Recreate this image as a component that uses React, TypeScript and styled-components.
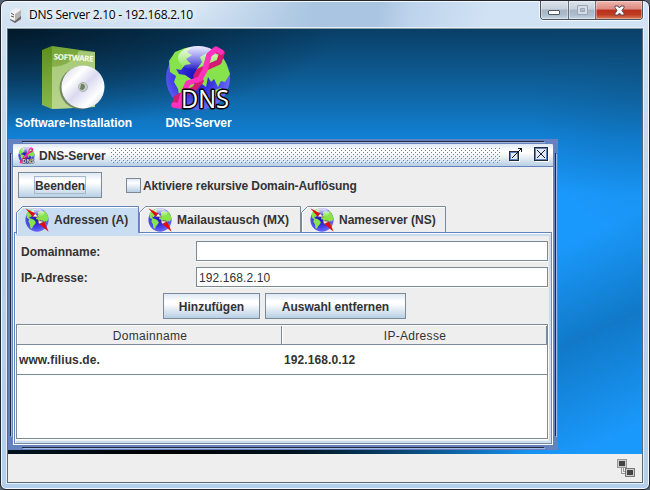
import React from "react";
import styled, { createGlobalStyle } from "styled-components";

const GlobalStyle = createGlobalStyle`
  html, body { margin: 0; padding: 0; overflow: hidden; }
  body { font: bold 12px/14px "Liberation Sans", Arial, sans-serif; color: #333; background: #54626e; }
  * { box-sizing: border-box; }
`;

const Window = styled.main`
  width: 650px;
  height: 490px;
  padding: 0 6px 6px;
  display: flex;
  flex-direction: column;
  border: 1px solid #23262c;
  border-radius: 7px 7px 6px 6px;
  box-shadow: inset 0 0 0 1px #f2f8fe;
  background: linear-gradient(100deg, rgba(255,255,255,0) 30%, #a9c5e1 48%, #a9c5e1 58%, #bdd3ec 63%, #d1e2f4 75%) 0 0 / 100% 28px no-repeat,
    linear-gradient(#dbe8f5, #cfe0f2 27px, #b6d1ec 50%, #b2cfec);
`;

const TitleBar = styled.header`
  height: 27px;
  flex: none;
  display: flex;
  align-items: flex-start;
  padding: 0 0 0 2px;
`;

const WindowTitle = styled.h1`
  flex: 1;
  margin: 5px 0 0 6px;
  font: 12px/17px "Open Sans", "Segoe UI", sans-serif;
  letter-spacing: -0.25px;
  color: #000;
  text-shadow: 0 0 6px #fff, 0 0 6px #fff;
`;

const AppIcon = styled.svg`
  margin-top: 6px;
  display: block;
`;

const Controls = styled.div`
  display: flex;
  height: 19px;
  border: 1px solid #4b535d;
  border-top: 0;
  border-radius: 0 0 4px 4px;
  box-shadow: 0 1px 0 #f2f8fd, 1px 0 0 #f2f8fd, -1px 0 0 #f2f8fd;
  overflow: hidden;
`;

const Control = styled.button<{ $w: number; $close?: boolean; $first?: boolean }>`
  width: ${(p) => p.$w}px;
  padding: 0;
  border: 0;
  border-left: ${(p) => (p.$first ? 0 : 1)}px solid #67727e;
  display: grid;
  place-items: center;
  box-shadow: inset 0 0 0 1px rgba(255, 255, 255, 0.35);
  background: ${(p) =>
    p.$close
      ? "linear-gradient(#efb5ae, #dc8a80 45%, #bb2f1a 50%, #bd3b20 75%, #da7b5c)"
      : "linear-gradient(#dce4ec, #c6d0db 45%, #a6b4c3 50%, #afbfd0 80%, #cad8e6)"};
  svg { display: block; }
`;

const Client = styled.section`
  flex: 1;
  display: flex;
  flex-direction: column;
  border: 1px solid #5b6875;
  border-top-color: #8c9b9c;
  box-shadow: 0 0 0 1px #e5f0fa;
`;

const Desktop = styled.div`
  height: 425px;
  flex: none;
  background:
    linear-gradient(90deg, #00131f, #000 25%, #00121e 45%, rgba(0, 24, 40, 0) 82%) 0 100% / 100% 30px no-repeat,
    radial-gradient(ellipse 330px 100px at 0 0, rgba(0, 10, 18, 0.72), rgba(0, 10, 18, 0.35) 55%, transparent),
    radial-gradient(ellipse 110px 150px at 100% 60px, rgba(10, 70, 112, 0.2), transparent),
    linear-gradient(155deg, transparent 66%, rgba(15, 115, 190, 0.85) 80%, rgba(26, 155, 255, 0) 96%),
    linear-gradient(#083f67, #0d5488 35px, #0f69aa 70px, #1180d4 108px, #1a99fc 165px, #1a99fc);
`;

const Shortcuts = styled.nav`
  height: 110px;
  padding: 16px 0 0 3px;
  display: flex;
`;

const Shortcut = styled.a`
  width: 125px;
  display: flex;
  flex-direction: column;
  align-items: center;
  color: #fff;
  svg { display: block; height: 66px; margin-right: 2px; overflow: visible; }
  span { margin-top: 5px; letter-spacing: -0.05px; }
`;

const Frame = styled.section`
  width: 550px;
  height: 311px;
  padding: 5px;
  display: flex;
  flex-direction: column;
  background:
    linear-gradient(#222a3c, #222a3c) 14px 2px / 522px 1px no-repeat,
    linear-gradient(#a3b8e0, #a3b8e0) 15px 3px / 522px 1px no-repeat,
    linear-gradient(#222a3c, #222a3c) 14px 308px / 522px 1px no-repeat,
    linear-gradient(#a3b8e0, #a3b8e0) 15px 309px / 522px 1px no-repeat,
    linear-gradient(#222a3c, #222a3c) 2px 14px / 1px 283px no-repeat,
    linear-gradient(#a3b8e0, #a3b8e0) 3px 15px / 1px 283px no-repeat,
    linear-gradient(#222a3c, #222a3c) 547px 14px / 1px 283px no-repeat,
    linear-gradient(#a3b8e0, #a3b8e0) 548px 15px / 1px 283px no-repeat,
    #6382bf;
`;

const FrameTitle = styled.header`
  height: 23px;
  flex: none;
  padding: 0 4px 0 5px;
  display: flex;
  align-items: center;
  border-bottom: 1px solid #6382bf;
  border-radius: 1px 1px 0 0;
  background: linear-gradient(#dde8f3, #fff 30%, #fff 40%, #b8cfe5);
`;

const FrameName = styled.h2`
  margin: 2px 6px 0 4px;
  font: inherit;
  width: 66px;
  white-space: nowrap;
`;

const Grip = styled.div`
  width: 391px;
  height: 15px;
  margin-right: 7px;
  background:
    conic-gradient(from 270deg at 1px 1px, #6382bf 90deg, transparent 0) 0 0 / 4px 4px,
    conic-gradient(from 270deg at 1px 1px, #6382bf 90deg, transparent 0) 2px 2px / 4px 4px,
    conic-gradient(from 270deg at 1px 1px, #fff 90deg, transparent 0) 1px 1px / 4px 4px,
    conic-gradient(from 270deg at 1px 1px, #fff 90deg, transparent 0) 3px 3px / 4px 4px;
`;

const FrameTool = styled.svg`
  display: block;
  margin: -2px 11px 0 0;
  &:last-child { margin-right: 0; }
`;

const FrameBody = styled.div`
  flex: 1;
  background: #eee;
  border: 1px solid #fff;
  border-top: 0;
  display: flex;
  flex-direction: column;
`;

const Actions = styled.div`
  height: 39px;
  flex: none;
  padding: 5px 0 0 4px;
  display: flex;
`;

const MetalButton = styled.button<{ $w: number }>`
  width: ${(p) => p.$w}px;
  height: 26px;
  padding: 1px 0 0;
  display: grid;
  place-items: center;
  border: 1px solid #7a8a99;
  color: #333;
  font: inherit;
  background: linear-gradient(#dde8f3, #fff 30%, #fff 40%, #b8cfe5);
`;

const FocusRing = styled.span`
  margin-top: -1px;
  border: 1px solid #a3b8cc;
  height: 18px;
  line-height: 18px;
  width: 52px;
  text-align: center;
  letter-spacing: -0.1px;
`;

const Check = styled.label`
  margin: 0 0 0 24px;
  height: 27px;
  display: flex;
  align-items: center;
  letter-spacing: -0.12px;
  &::before {
    content: "";
    width: 13px;
    height: 13px;
    margin-right: 2px;
    margin-left: 0;
    outline: 0;
    border: 1px solid #7a8a99;
    background: linear-gradient(#dde8f3, #fff 30%, #b8cfe5);
  }
`;

const Tabs = styled.div`
  height: 26px;
  flex: none;
  display: flex;
  padding-left: 2px;
`;

const Tab = styled.div<{ $w: number }>`
  width: ${(p) => p.$w}px;
  height: 26px;
  display: grid;
  grid-template-columns: 100%;
  > * { grid-area: 1 / 1; }
  > svg { display: block; z-index: 1; }
`;

const TabLabel = styled.span<{ $ls: number }>`
  z-index: 2;
  display: flex;
  align-items: center;
  padding-left: 9px;
  gap: 5px;
  height: 27px;
  white-space: nowrap;
  letter-spacing: ${(p) => p.$ls}px;
`;

const Pane = styled.div`
  flex: 1;
  padding: 3px 0 0 1px;
  border: 1px solid #6382bf;
  border-right-color: #7a8a99;
  border-bottom-color: #7a8a99;
  background:
    linear-gradient(#fff, #fff) 0 0 / 100% 1px no-repeat,
    linear-gradient(#c8ddf2, #c8ddf2) 1px 1px / 100% 2px no-repeat,
    linear-gradient(#fff, #fff) 0 0 / 1px 100% no-repeat,
    linear-gradient(#c8ddf2, #c8ddf2) 100% 0 / 2px 100% no-repeat,
    linear-gradient(#c8ddf2, #c8ddf2) 0 100% / 100% 2px no-repeat,
    #eee;
`;

const Field = styled.label`
  display: flex;
  align-items: center;
  height: 20px;
  margin: 5px 3px 6px 5px;
  & + & { margin-top: 0; }
  span { width: 175px; padding-top: 1px; }
`;

const Input = styled.input`
  width: 352px;
  height: 20px;
  padding: 1px 0 0 2px;
  border: 1px solid #7a8a99;
  outline: 0;
  background: #fff;
  box-shadow: 0 1px 0 #fff;
  color: #333;
  font: 12px "Liberation Sans", Arial, sans-serif;
  letter-spacing: 0.1px;
`;

const ButtonRow = styled.div`
  display: flex;
  gap: 5px;
  padding-left: 147px;
`;

const Table = styled.div`
  width: 532px;
  height: 115px;
  margin-top: 5px;
  border: 1px solid #7a8a99;
  box-shadow: 0 1px 0 #fff, 1px 0 0 #fff;
  background: #fff;
`;

const Row = styled.div<{ $head?: boolean }>`
  display: grid;
  grid-template-columns: 265px 1fr;
  height: ${(p) => (p.$head ? 20 : 30)}px;
  border-bottom: 1px solid #7a8a99;
  font-weight: ${(p) => (p.$head ? 400 : 700)};
`;

const HeadCell = styled.span`
  height: 19px;
  background: #eee;
  border: solid #fff;
  border-width: 1px 0 0 1px;
  box-shadow: inset -1px 0 0 #7a8a99;
  line-height: 20px;
  text-align: center;
  letter-spacing: 0.3px;
`;

const Cell = styled.span`
  padding-left: 2px;
  line-height: 30px;
  letter-spacing: 0.1px;
`;

const StatusBar = styled.footer`
  flex: 1;
  background: #eee;
  display: flex;
  justify-content: flex-end;
  padding: 5px 7px 0 0;
`;

const landWest =
  "M4 16 10 7 20 3 27 2 22 7 27 10 21 14 26 19 20 20 16 25 11 24 14 29 20 30 26 34 30 40 26 46 22 50 19 57 15 55 13 44 9 37 11 31 5 27Z";
const landEast =
  "M32 24 37 17 35 12 42 8 49 10 55 8 61 18 65 29 60 37 56 36 53 42 49 34 46 37 43 32 41 42 37 39 35 31 30 31Z M50 45 56 43 58 48 53 52 48 50Z";

const Globe = ({ id }: { id: string }) => (
  <>
    <defs>
      <radialGradient id={id} cx="45%" cy="45%" r="60%">
        <stop offset="0" stopColor="#1813bd" />
        <stop offset=".5" stopColor="#3b35e0" />
        <stop offset="1" stopColor="#6f70ff" />
      </radialGradient>
      <linearGradient id={id + "s"} x2="0" y2="1">
        <stop stopColor="#fff" stopOpacity=".9" />
        <stop offset="1" stopColor="#fff" stopOpacity="0" />
      </linearGradient>
    </defs>
    <circle cx="33" cy="33" r="32" fill={`url(#${id})`} />
    <path d={landWest + landEast} fill="#87e34b" />
    <ellipse cx="33" cy="13" rx="20" ry="12" fill={`url(#${id}s)`} />
  </>
);

const Helix = () => (
  <g fill="none" strokeLinejoin="round" strokeLinecap="round">
    <path d="M50 5 57 8 54 17 34 26 31 31 36 36 29 44 11 53 10 60" stroke="#d51b6e" strokeWidth="5.500" />
    <path d="M9 60 15 61 18 49 23 38 35 34 40 25 44 10 51 4 56 7" stroke="#ff31bd" strokeWidth="5.500" />
  </g>
);

const CompassGlobe = ({ id }: { id: string }) => (
  <svg width="24" height="24" viewBox="0 0 66 66">
    <Globe id={id} />
    <path d="M1 1 28 15 21 24Z M65 65 53 37 39 44Z" fill="#e30b13" />
    <path d="M28 15 37 25 21 24Z M39 44 36 35 53 37Z" fill="#fff" stroke="#8c3038" strokeWidth="1.500" />
  </svg>
);

const tabs = [
  { label: "Adressen (A)", w: 123, ls: -0.04 },
  { label: "Mailaustausch (MX)", w: 162, ls: 0 },
  { label: "Nameserver (NS)", w: 145, ls: 0 },
];

export default function App() {
  return (
    <>
      <GlobalStyle />
      <Window>
        <TitleBar>
          <AppIcon width="14" height="17" viewBox="0 0 14 17">
            <path d="M1 5 7 1 12 3 12 12 6 16 1 13Z" fill="#f2f2f2" />
            <path d="M6 7 12 3 12 12 6 16Z" fill="#b4b4b4" />
            <path d="M1 12 6 14 12 9 12 12 6 16 1 13Z" fill="#666" />
            <path d="M2 6 5 8M2 9 5 10" stroke="#555" />
          </AppIcon>
          <WindowTitle>DNS Server 2.10 - 192.168.2.10</WindowTitle>
          <Controls>
            <Control $w={27} $first aria-label="Minimieren">
              <svg width="13" height="18"><rect x=".5" y="9.500" width="11" height="4" rx=".5" fill="#fff" stroke="#4d5763" /></svg>
            </Control>
            <Control $w={27} aria-label="Maximieren">
              <svg width="13" height="18"><path d="M1.500 4.500h10v9h-10z M4.500 7.500h4v3h-4z" fill="#d4dce5" fillRule="evenodd" stroke="#9aa6b3" /></svg>
            </Control>
            <Control $w={47} $close aria-label="Schließen">
              <svg width="13" height="18"><path d="M2 5h3l1.500 2L8 5h3v1.500L9 9.500l2 3V14H8l-1.500-2L5 14H2v-1.500l2-3-2-3Z" fill="#fff" stroke="#564b58" /></svg>
            </Control>
          </Controls>
        </TitleBar>
        <Client>
          <Desktop>
            <Shortcuts>
              <Shortcut>
                <svg width="64" height="66" viewBox="0 0 64 66">
                  <defs>
                    <linearGradient id="box" x2="0" y2="1"><stop stopColor="#75a638" /><stop offset="1" stopColor="#a8cb70" /></linearGradient>
                    <linearGradient id="side" x2="0" y2="1"><stop stopColor="#5d8f1d" /><stop offset="1" stopColor="#8ab84b" /></linearGradient>
                    <linearGradient id="disc" x2="1" y2="1"><stop stopColor="#cdcde0" /><stop offset=".3" stopColor="#fff" /><stop offset=".5" stopColor="#dadaf0" /><stop offset=".75" stopColor="#fff" /><stop offset="1" stopColor="#c5c5dc" /></linearGradient>
                  </defs>
                  <path d="M1 5 11 1V64L1 60Z" fill="url(#side)" />
                  <path d="M11 1 54 7V62L11 64Z" fill="url(#box)" />
                  <path d="M11 22Q30 21 38 6L54 7V62L11 64Z" fill="#c5dca0" opacity=".6" />
                  <text x="12.500" y="14.500" textLength="40" transform="rotate(3 12 14)" fontFamily="Open Sans" fontSize="8" fontWeight="700" fill="#f4ffe2">SOFTWARE</text>
                  <circle cx="40" cy="43" r="21.500" fill="#66745c" opacity=".8" />
                  <circle cx="42" cy="42" r="21.500" fill="url(#disc)" />
                  <circle cx="42" cy="42" r="4.500" fill="#c9cec8" stroke="#aeb3b0" />
                  <path d="M40 39a3 3 0 1 1-1 5Z" fill="#708067" />
                </svg>
                <span>Software-Installation</span>
              </Shortcut>
              <Shortcut>
                <svg width="66" height="66" viewBox="0 0 66 66">
                  <Globe id="g0" />
                  <Helix />
                  <text x="16" y="62.500" textLength="48" lengthAdjust="spacingAndGlyphs" fontFamily="Open Sans" fontWeight="400" fontSize="25" fill="#fff" stroke="#000" strokeWidth="3" strokeLinejoin="round" paintOrder="stroke">DNS</text>
                </svg>
                <span>DNS-Server</span>
              </Shortcut>
            </Shortcuts>
            <Frame>
              <FrameTitle>
                <svg width="17" height="17" viewBox="0 0 66 66">
                  <Globe id="g1" />
                  <Helix />
                  <text x="17" y="63" fontFamily="Open Sans" fontWeight="700" fontSize="22" fill="#ddd" stroke="#222" strokeWidth="3" paintOrder="stroke">DNS</text>
                </svg>
                <FrameName>DNS-Server</FrameName>
                <Grip />
                <FrameTool width="15" height="15" shapeRendering="crispEdges">
                  <path d="M2 5h10v10H2z" fill="#fff" />
                  <path d="M1.500 4.500h9v9h-9z" fill="#dce8f5" stroke="#222a3c" />
                  <path d="M2.500 5.500h7v7h-7z" fill="none" stroke="#6382bf" />
                  <path d="M4 10h1v1H4zM5 9h1v1H5zM6 8h1v1H6zM7 7h1v1H7zM8 6h1v1H8zM9 5h1v1H9zM10 4h1v1h-1zM11 3h1v1h-1zM12 2h1v1h-1zM10 1h4v4h-1V2h-3z" fill="#10131c" />
                </FrameTool>
                <FrameTool width="15" height="15" shapeRendering="crispEdges">
                  <path d="M1 1h14v14H1z" fill="#fff" />
                  <path d="M.5.5h13v13H.5z" fill="#e1eaf6" stroke="#222a3c" />
                  <path d="M1.500 1.500h11v11h-11z" fill="none" stroke="#6382bf" />
                  <path d="M3 3h1v1h1v1h1v1h2V5h1V4h1V3h1v1h-1v1h-1v1H8v2h1v1h1v1h1v1h-1v-1H9V9H8V8H6v1H5v1H4v1H3v-1h1V9h1V8h1V6H5V5H4V4H3Z" fill="#161b2b" />
                </FrameTool>
              </FrameTitle>
              <FrameBody>
                <Actions>
                  <MetalButton $w={84}><FocusRing>Beenden</FocusRing></MetalButton>
                  <Check>Aktiviere rekursive Domain-Auflösung</Check>
                </Actions>
                <Tabs>
                  {tabs.map((t, i) => (
                    <Tab key={t.label} $w={t.w}>
                      <svg width={t.w + 1} height={i === 0 ? 28 : 26}>
                        <path d={`M.5 30V6.500L6.500.5H${t.w - 0.5}V${i === 0 ? 26.5 : 30}${i === 0 ? "H" + (t.w + 2) + "V30" : ""}`} fill={i === 0 ? "#c8ddf2" : "#eee"} stroke={i === 0 ? "#6382bf" : "#7a8a99"} />
                        <path d={`M1.500 30V7L7 1.500H${t.w - 1}`} fill="none" stroke="#fff" />
                      </svg>
                      <TabLabel $ls={t.ls}>
                        <CompassGlobe id={"t" + i} />
                        {t.label}
                      </TabLabel>
                    </Tab>
                  ))}
                </Tabs>
                <Pane>
                  <Field><span>Domainname:</span><Input defaultValue="" /></Field>
                  <Field><span>IP-Adresse:</span><Input defaultValue="192.168.2.10" /></Field>
                  <ButtonRow>
                    <MetalButton $w={97}>Hinzufügen</MetalButton>
                    <MetalButton $w={141}>Auswahl entfernen</MetalButton>
                  </ButtonRow>
                  <Table>
                    <Row $head><HeadCell>Domainname</HeadCell><HeadCell>IP-Adresse</HeadCell></Row>
                    <Row><Cell>www.filius.de.</Cell><Cell>192.168.0.12</Cell></Row>
                  </Table>
                </Pane>
              </FrameBody>
            </Frame>
          </Desktop>
          <StatusBar>
            <svg width="18" height="19" shapeRendering="crispEdges">
              <path d="M4.500 9v5h7M6.500 9v3h5" fill="none" stroke="#999" />
              <path d="M.5.5h9v8h-9z" fill="#ccc" stroke="#999" />
              <path d="M2 2h6v5H2z" fill="#444" />
              <path d="M8.500 9.500h9v8h-9z" fill="#ccc" stroke="#777" />
              <path d="M10 11h6v5h-6z" fill="#444" />
            </svg>
          </StatusBar>
        </Client>
      </Window>
    </>
  );
}
